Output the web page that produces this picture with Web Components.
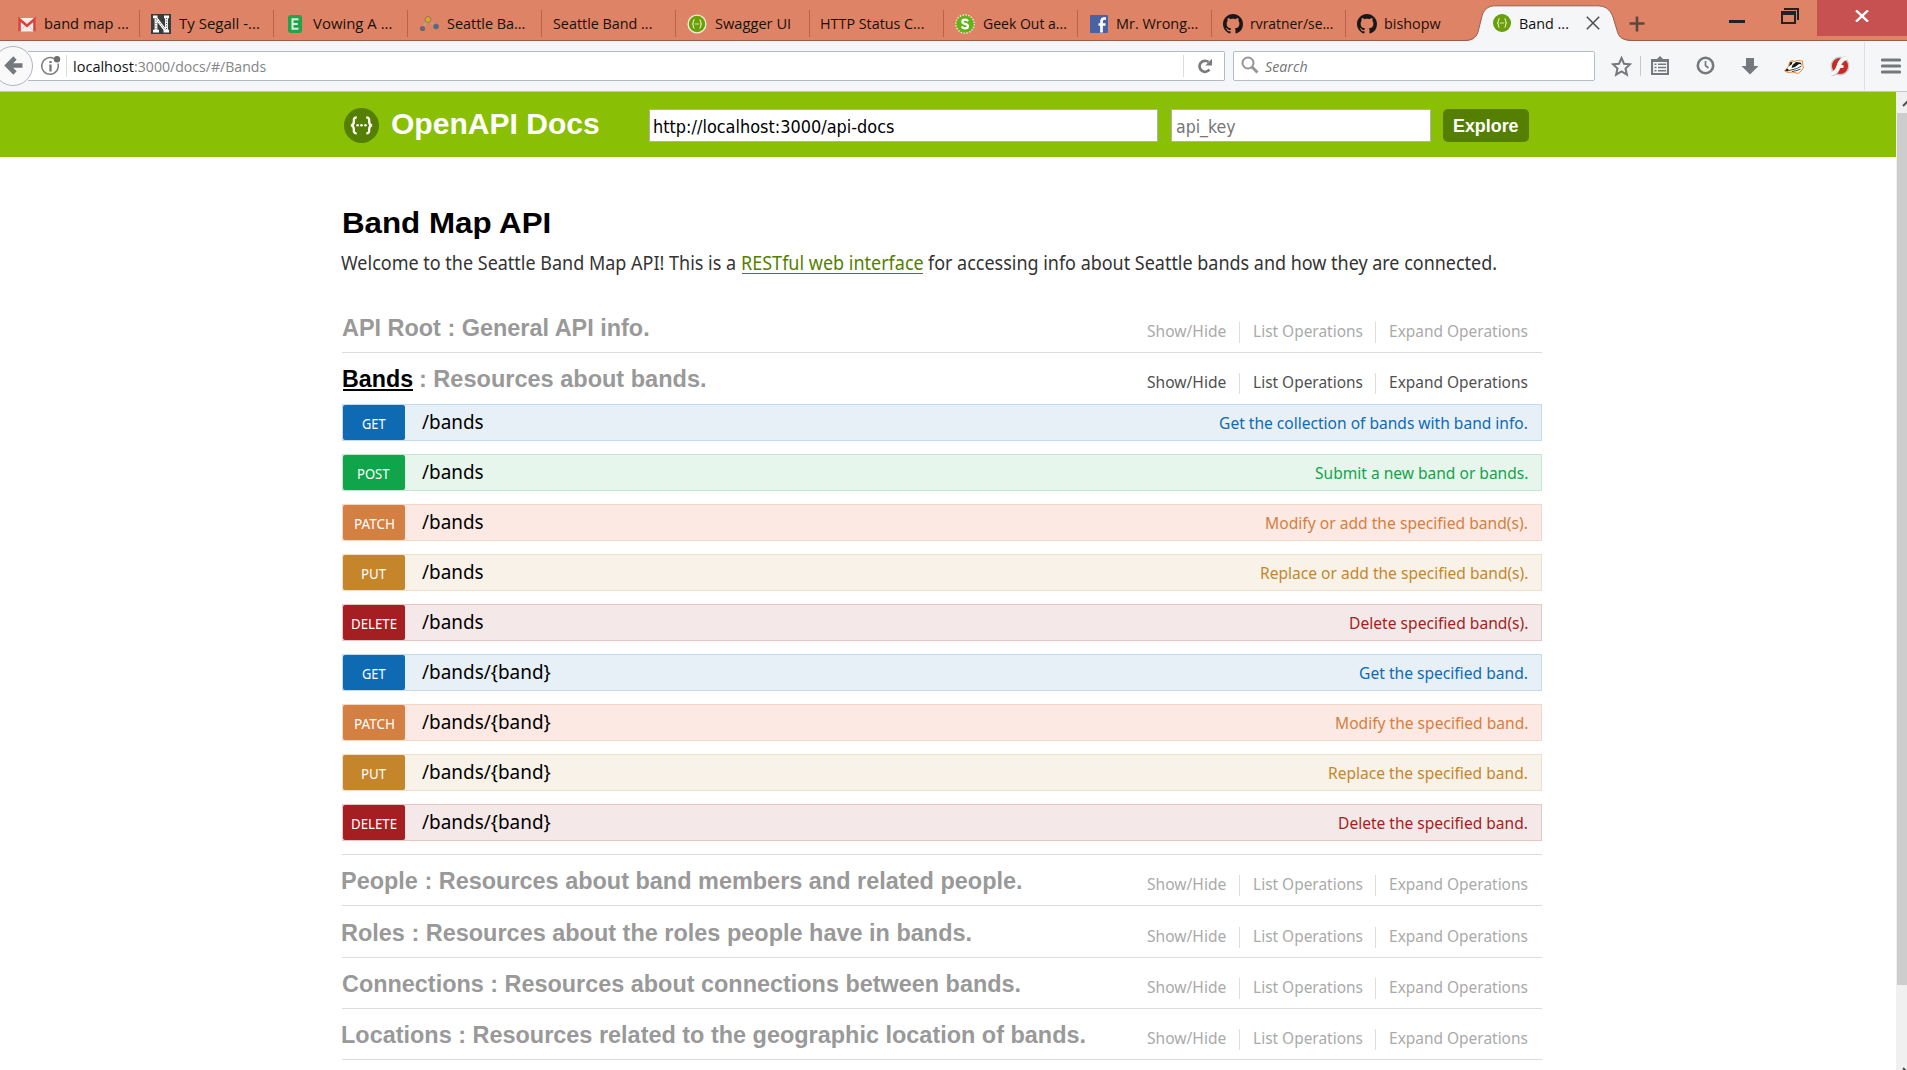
<!DOCTYPE html>
<html lang="en">
<head>
<meta charset="utf-8">
<title>Band Map API</title>
<style>
html,body{margin:0;height:100%;overflow:hidden;background:#fff}
body{font-family:"Noto Sans","Open Sans",sans-serif;color:#333}
</style>
</head>
<body>
<docs-window></docs-window>
<script>
const define = (name, html, after) => customElements.define(name, class extends HTMLElement {
  connectedCallback() {
    if (this.shadowRoot) return;
    const t = document.createElement('template');
    t.innerHTML = typeof html === 'function' ? html(this) : html;
    this.attachShadow({mode: 'open'}).append(t.content.cloneNode(true));
    if (after) after(this);
  }
});

/* Single line of text drawn at an exact ink width, set by the w attribute. */
const pen = document.createElement('canvas').getContext('2d');
define('fit-text', `<style>:host{display:block;flex:none;white-space:pre}span{display:inline-block;transform-origin:0 50%}</style><span><slot></slot></span>`, el => {
  const w = +el.getAttribute('w'), cs = getComputedStyle(el), s = el.shadowRoot.querySelector('span');
  pen.font = `${cs.fontStyle} ${cs.fontWeight} ${cs.fontSize} ${cs.fontFamily}`;
  const m = pen.measureText(el.textContent);
  const k = w / (m.actualBoundingBoxRight + m.actualBoundingBoxLeft);
  el.style.width = w + 'px';
  s.style.transform = `translateX(${m.actualBoundingBoxLeft * k}px) scaleX(${k})`;
});

const swagger = (ring) => `<svg width="20" height="20" viewBox="0 0 20 20"><circle cx="10" cy="10" r="${ring ? 9.6 : 9}" fill="${ring ? '#e9efdc' : '#5f9a10'}"/><circle cx="10" cy="10" r="8.2" fill="#6a9f08"/><path d="M7.6 5.6C5.9 5.6 6.6 8 6.2 9.1Q5.9 9.9 5 10Q5.9 10.100 6.2 10.900C6.600 12 5.900 14.400 7.600 14.400M12.400 5.600C14.100 5.600 13.400 8 13.800 9.100Q14.100 9.900 15 10Q14.100 10.100 13.800 10.900C13.400 12 14.100 14.400 12.400 14.400M7.800 10H12.200" fill="none" stroke="#d7e8b4" stroke-width="1.200"/></svg>`;
const github = `<svg width="20" height="20" viewBox="0 0 16 16"><path fill="#191717" d="M8 0C3.58 0 0 3.58 0 8c0 3.54 2.29 6.53 5.47 7.59.4.07.55-.17.55-.38 0-.19-.01-.82-.01-1.49-2.01.37-2.53-.49-2.69-.94-.09-.23-.48-.94-.82-1.13-.28-.15-.68-.52-.01-.53.63-.01 1.08.58 1.23.82.72 1.21 1.87.87 2.33.66.07-.52.28-.87.51-1.07-1.78-.2-3.64-.89-3.64-3.95 0-.87.31-1.59.82-2.15-.08-.2-.36-1.02.08-2.12 0 0 .67-.21 2.2.82.64-.18 1.32-.27 2-.27s1.36.09 2 .27c1.53-1.04 2.2-.82 2.2-.82.44 1.1.16 1.92.08 2.12.51.56.82 1.27.82 2.15 0 3.07-1.87 3.75-3.65 3.95.29.25.54.73.54 1.48 0 1.07-.01 1.93-.01 2.2 0 .21.15.46.55.38A8.01 8.01 0 0 0 16 8c0-4.420-3.580-8-8-8z"/></svg>`;
const icons = {
  gmail: `<svg width="20" height="20" viewBox="0 0 20 20"><rect x="1.500" y="4" width="17" height="13.500" rx="1" fill="#eee"/><path d="M4 16.500L9 10.500M16 16.500L11 10.500" stroke="#ccc"/><path d="M2.500 17.500V5.300L10 11.800L17.500 5.300V17.500" fill="none" stroke="#d8433a" stroke-width="2.600"/></svg>`,
  npr: `<svg width="20" height="20" viewBox="0 0 20 20"><path fill="#3b3b3d" d="M0 0H20V20H0z"/><path d="M2 2.800H6.500M5 4V16.500M2 17.200H8M13 2.800H18M15.500 4V16.500M12.500 17.200H18M5 4L14.500 16.500" fill="none" stroke="#fff" stroke-width="2.800"/><path d="M5 4V16M15.500 4V16M5.500 5L14.500 16" stroke="#3b3b3d" stroke-width=".9" stroke-dasharray="1 1.500"/></svg>`,
  e: `<svg width="20" height="20" viewBox="0 0 20 20"><rect x="3" y="1" width="14" height="18" rx="3" fill="#21a34c"/><path d="M13.500 5.200H7.500V14.800H13.500M7.500 10H12.800" fill="none" stroke="#d8efd9" stroke-width="2"/></svg>`,
  graph: `<svg width="20" height="20" viewBox="0 0 20 20"><path d="M3.500 14.500L9 5.500L17 12.500" fill="none" stroke="#b9a096" stroke-width="1.600"/><circle cx="3.500" cy="14.500" r="2.600" fill="#6c6570"/><circle cx="9" cy="5.500" r="3" fill="#e2a52b" stroke="#8c7a58"/><circle cx="17" cy="12.500" r="2.500" fill="#41718a" stroke="#736d70"/></svg>`,
  swagger: swagger(true), swaggerPlain: swagger(false), github,
  s: `<svg width="20" height="20" viewBox="0 0 20 20"><circle cx="10" cy="10" r="9" fill="#6cb71e" stroke="#e4edd2" stroke-width="1.800" stroke-dasharray="1.400 1.430"/><circle cx="10" cy="10" r="8.600" fill="#65b31a"/><path d="M13 7.200Q12 5.700 10 5.700Q7.400 5.700 7.400 7.700Q7.400 9.200 10 9.800Q12.900 10.400 12.900 12.200Q12.900 14.300 10 14.300Q7.700 14.300 6.800 12.500" fill="none" stroke="#fff" stroke-width="2.300"/></svg>`,
  fb: `<svg width="20" height="20" viewBox="0 0 20 20"><rect x="1" y="1" width="18" height="18" rx="1" fill="#4862a3"/><path d="M12.500 18.500V8.500Q12.500 4.500 15 4.500H17M9.500 10.500H16.500" fill="none" stroke="#fff" stroke-width="2.700"/></svg>`
};

define('browser-tab', el => `<style>
:host{display:flex;align-items:center;box-sizing:border-box;width:134px;height:35px;padding-left:11px;gap:8px;font:15px "Open Sans",sans-serif;color:#1b0f0b;flex:none}
:host([last]){width:118px}
i{flex:none;margin-left:auto;width:1px;height:27px;background:#ba6349}
:host([last]) i{display:none}
svg{display:block;flex:none}
::slotted(*){margin-top:-1px}
</style>${icons[el.getAttribute('icon')] || ''}<slot></slot><i></i>`);

define('active-tab', `<style>
:host{display:flex;position:relative;width:168px;height:36px;flex:none;margin-top:-1px;align-items:center;font:15px "Open Sans",sans-serif;color:#111}
.bg{position:absolute;left:0;top:0}
.in{display:flex;align-items:center;padding-left:28px;position:relative}
svg{display:block}
</style><svg class="bg" width="170" height="37" viewBox="0 0 170 37"><path d="M0 36C7 36 12 33.500 14 27L17.500 13C19 5 24 .8 31 .8H133C141 .8 146 4 149 12L153.500 27C155.500 33.500 160 36 170 36V37H0z" fill="#f5f6f7"/><path d="M0 35.500C7 35.500 12 33.500 14 27L17.500 13C19 5 24 .8 31 .8H133C141 .8 146 4 149 12L153.500 27C155.500 33.500 160 35.500 170 35.500" fill="none" stroke="#9b5d49" stroke-width="1"/></svg>
<div class="in">${icons.swaggerPlain}<fit-text w="48" style="margin-left:8px">Band ...</fit-text><svg width="14" height="14" viewBox="0 0 14 14" style="margin-left:18px"><path d="M.8 .8L13.200 13.200M13.200 .8L.8 13.200" stroke="#4c4c4c" stroke-width="1.500"/></svg></div>`);

const tabs = [['gmail','band map ...',83],['npr','Ty Segall -...',80],['e','Vowing A ...',78.5],['graph','Seattle Ba...',77.5],['','Seattle Band ...',98.5],['swagger','Swagger UI',75],['','HTTP Status C...',102.5],['s','Geek Out a...',83],['fb','Mr. Wrong...',80.5],['github','rvratner/se...',81.5],['github','bishopw',56]];
define('tab-strip', `<style>
:host{display:flex;box-sizing:border-box;height:41px;padding:6px 0 0 6px;background:linear-gradient(#de8365,#de8365 40px,#9b5d49 40px)}
.plus{margin:10px 0 0 -3px;flex:none}
.win{display:flex;margin:-6px 0 0 auto;height:36px;flex:none}
.min{width:16px;height:3px;background:#222;margin:20px 36px 0 0}
.res{margin:8px 18px 0 0}
.close{width:90px;background:#c75050;display:flex}
.close svg{margin:10px 0 0 38px}
</style>${tabs.map((t, i) => `<browser-tab icon="${t[0]}"${i === 10 ? ' last' : ''}><fit-text w="${t[2]}">${t[1]}</fit-text></browser-tab>`).join('')}
<active-tab></active-tab>
<svg class="plus" width="16" height="16" viewBox="0 0 16 16"><path d="M8 .5V15.500M.5 7.500H15.500" stroke="#5b4740" stroke-width="2.600"/></svg>
<div class="win"><div class="min"></div><svg class="res" width="18" height="16" viewBox="0 0 18 16" shape-rendering="crispEdges"><path d="M3 0H18V12H16V2H3zM0 3H15V16H0zM2 7V14H13V7z" fill="#222" fill-rule="evenodd"/></svg><div class="close"><svg width="14" height="12" viewBox="0 0 14 12"><path d="M1 .3L13 11.700M13 .3L1 11.700" stroke="#fff" stroke-width="2.300"/></svg></div></div>`);

define('nav-bar', `<style>
:host{display:flex;align-items:center;box-sizing:border-box;height:51px;background:#f5f6f7;border-bottom:1px solid #c2c3c5;font:15px "Open Sans",sans-serif}
svg{display:block;flex:none}
.back{margin-right:-5px;position:relative;flex:none}
.url,.search{display:flex;align-items:center;box-sizing:border-box;height:30px;background:#fff;border:1px solid #b3bac7}
.url{width:1197px;border-left:0;margin-left:0;border-radius:0 2px 2px 0}
.search{width:362px;margin-left:8px;border-radius:2px;padding-left:7px;border-color:#b6bdca}
.sep{width:1px;height:22px;background:#dcdcdc;flex:none}
</style>
<svg class="back" width="33" height="40" viewBox="0 0 33 40"><circle cx="13" cy="20" r="19.500" fill="#f9f9fa" stroke="#aeb5c1"/><path d="M15 12L7.500 19.500L15 27M8.500 19.500H22.500" fill="none" stroke="#75787d" stroke-width="4.600"/></svg>
<div class="url">
<svg width="22" height="22" viewBox="0 0 22 22" style="margin-left:12px"><path d="M14 3.600A8.300 8.300 0 1 0 18 8.500" fill="none" stroke="#808080" stroke-width="1.500"/><path d="M10.500 9.600V16.500M10.500 6V8" stroke="#777" stroke-width="2.300"/><circle cx="17" cy="4.200" r="3.200" fill="#6f6f6f"/></svg>
<div class="sep" style="margin:0 7px 0 4px"></div>
<fit-text w="59.5" style="color:#111">localhost</fit-text><fit-text w="131" style="color:#858585;margin-left:1px">:3000/docs/#/Bands</fit-text>
<div class="sep" style="margin-left:auto"></div>
<svg width="14" height="16" viewBox="0 0 14 16" style="margin:0 12.500px 0 14px"><path d="M11.500 11.500A5.500 5.500 0 1 1 10.500 4" fill="none" stroke="#7b7b7b" stroke-width="2.700"/><path d="M14 .8V7.500H7.300z" fill="#7b7b7b"/></svg>
</div>
<div class="search"><svg width="18" height="18" viewBox="0 0 18 18" style="margin-top:-2px"><circle cx="7" cy="7" r="5.500" fill="none" stroke="#969696" stroke-width="2"/><path d="M11 11L16.500 16.500" stroke="#969696" stroke-width="3"/></svg><fit-text w="42" style="font-style:italic;color:#757575;margin-left:6px">Search</fit-text></div>
<svg width="21" height="21" viewBox="0 0 21 21" style="margin-left:16px"><path d="M10.500 2L13 7.700L19 8.300L14.500 12.500L15.900 18.700L10.500 15.500L5.100 18.700L6.500 12.500L2 8.300L8 7.700z" fill="none" stroke="#75787d" stroke-width="2"/></svg>
<div class="sep" style="height:20px;background:#c9c9c9;margin:0 10px 0 8px"></div>
<svg width="18" height="20" viewBox="0 0 18 20"><path d="M1 4H17V18H1z" fill="none" stroke="#75787d" stroke-width="2.200"/><path d="M5 4L9 0L13 4zM0 3H18V6H0z" fill="#75787d"/><path d="M3.500 8.300H5.500M7 8.300H15M3.500 11.500H5.500M7 11.500H15M3.500 14.700H5.500M7 14.700H15" stroke="#75787d" stroke-width="1.600"/></svg>
<svg width="20" height="20" viewBox="0 0 20 20" style="margin-left:26px"><circle cx="10.500" cy="9.500" r="7.700" fill="none" stroke="#75787d" stroke-width="2.600"/><path d="M10.500 5V9.700L13.500 12" fill="none" stroke="#75787d" stroke-width="1.700"/></svg>
<svg width="18" height="18" viewBox="0 0 18 18" style="margin-left:26px"><path d="M5 1H13V9H17.500L9 17.500L.5 9H5z" fill="#75787d"/></svg>
<svg width="20" height="18" viewBox="0 0 20 18" style="margin-left:25px"><path d="M.6 14L3 11L4.500 9.500L5.500 5L8 3.500L10 4.500L14 3.500L18.500 4L18.800 8L19.300 11L17 14L14 16.500L9 15L4 15.500z" fill="#fff" stroke="#ea8a35" stroke-width="1"/><path d="M5 9.500L6 5.500L8.500 4.500L8 7zM8.500 8L12 5L16.500 5.500L18 7.500L15 7L11 10L7.500 11zM1 13.500L3.500 11.500L5 13L4 14.500z" fill="#171717"/><path d="M5 13.500L9 12.500L13 11.500L17.500 9M8 14.500L13 13.500L16.500 12" fill="none" stroke="#333" stroke-width=".9"/></svg>
<svg width="20" height="20" viewBox="0 0 20 20" style="margin-left:26px"><circle cx="10" cy="10" r="8.800" fill="#cb2a22" stroke="#c9c9ca" stroke-width="1.400"/><path d="M1 18.300Q6.500 17.500 8.800 10Q10.800 2.800 17 2" fill="none" stroke="#bdbdbf" stroke-width="4.600"/><path d="M1 18Q6.500 17.200 8.600 10Q10.600 2.500 17 1.800" fill="none" stroke="#f8f8f8" stroke-width="3.700"/><path d="M8 10.500H13.500" stroke="#f8f8f8" stroke-width="2.800"/></svg>
<div class="sep" style="height:48px;margin:0 16px 0 14px;background:#dedfe1"></div>
<svg width="20" height="16" viewBox="0 0 20 16"><path d="M1.500 2H18.500M1.500 8H18.500M1.500 14H18.500" stroke="#75787d" stroke-width="3.200" stroke-linecap="round"/></svg>`);

define('docs-header', `<style>
:host{display:flex;box-sizing:border-box;height:65px;padding:17px 0 0 344px;background:#89bf04;align-items:flex-start}
.title{font:bold 30px/33px "Liberation Sans",sans-serif;color:#fff;margin:-2px 0 0 13px}
.box{box-sizing:border-box;height:33px;border:1px solid #b1b1a8;background:#fff;font:18px/33px "DejaVu Sans Condensed","DejaVu Sans",sans-serif;color:#000;padding-left:4px}
.btn{margin-left:12px;width:86px;height:33px;border-radius:5px;background:#547f00;color:#fff;font:bold 18px/34px "Liberation Sans",sans-serif;box-sizing:border-box;padding-left:11px}
</style>
<svg width="35" height="35" viewBox="0 0 35 35" style="margin-top:-1px"><circle cx="17.500" cy="17.500" r="17.500" fill="#547f00"/><path d="M12.700 9.500C9.600 9.300 9.800 11.500 9.800 14C9.800 16.500 9 17.200 7 17.400C9 17.700 9.800 18.500 9.800 21C9.800 23.500 9.600 25.500 12.700 25.300M22.300 9.500C25.400 9.300 25.200 11.500 25.200 14C25.200 16.500 26 17.200 28 17.400C26 17.700 25.200 18.500 25.200 21C25.200 23.500 25.400 25.500 22.300 25.300" fill="none" stroke="#fff" stroke-width="2.300"/><g fill="#fff"><circle cx="13.600" cy="17.300" r="1.300"/><circle cx="17.500" cy="17.300" r="1.300"/><circle cx="21.400" cy="17.300" r="1.300"/></g></svg>
<fit-text class="title" w="207">OpenAPI Docs</fit-text>
<div class="box" style="width:509px;margin-left:50px"><fit-text w="240">http://localhost:3000/api-docs</fit-text></div>
<div class="box" style="width:260px;margin-left:13px;padding-left:3.500px;color:#757575"><fit-text w="60">api_key</fit-text></div>
<div class="btn"><fit-text w="64.500">Explore</fit-text></div>`);

/* One API resource: heading on the left, operation links on the right. */
define('api-resource', el => `<style>
:host{display:block}
.head{display:flex;box-sizing:border-box;height:${el.getAttribute('h')}px;align-items:flex-end;color:#999}
:host([line]) .head{border-bottom:1px solid #ddd}
h2{margin:0 0 9.500px 0;display:flex;font:bold 23.500px/30px "Liberation Sans",sans-serif}
.ops{display:flex;align-items:center;margin:0 14px 7px auto;font:16.500px/28px "Noto Sans",sans-serif;color:#aaa}
:host([active]) .ops{color:#505050}
:host([active]) h2{margin:0 0 10px 1px}
:host([active]) .ops{margin-bottom:8px}
i{width:1px;height:21px;background:#ddd;margin:2px 14px 0 13px}
i+fit-text+i{margin-left:12px}
</style><div class="head"><h2><slot name="title"></slot></h2><div class="ops"><fit-text w="79">Show/Hide</fit-text><i></i><fit-text w="109">List Operations</fit-text><i></i><fit-text w="138">Expand Operations</fit-text></div></div><slot></slot>`);

const palette = {GET:['#0f6ab4','#e7f0f7','#c3d9ec',24],POST:['#10a54a','#e7f6ec','#c3e8d1',32],PATCH:['#d38042','#fce9e3','#f5d5c3',39],PUT:['#c5862b','#f9f2e9','#f0e0ca',24.5],DELETE:['#a41e22','#f5e8e8','#e8c6c7',44.5]};
define('api-operation', el => {
  const m = el.getAttribute('method'), [c, bg, line, w] = palette[m];
  return `<style>
:host{display:flex;align-items:center;box-sizing:border-box;height:37px;margin-bottom:13px;border:1px solid ${line};background:${bg};padding-right:13.500px}
.m{width:62px;height:35px;border-radius:2px;background:${c};color:#fff;font:13.500px/38px "Noto Sans",sans-serif;display:flex;justify-content:center}
.p{font:19px/32px "Noto Sans",sans-serif;color:#000;margin:-2px 0 0 17px}
.d{font:16.500px/34px "Noto Sans",sans-serif;color:${c};margin-left:auto}
</style><div class="m"><fit-text w="${w}">${m}</fit-text></div><div class="p"><slot name="path"></slot></div><div class="d"><slot></slot></div>`;
});

define('page-scrollbar', `<style>:host{display:block;width:11px;background:#f0f0f0;flex:none;overflow:hidden}
div{height:872px;margin-left:1px;background:#cdcdcd}svg{display:block}</style>
<svg width="11" height="21" viewBox="0 0 11 21"><path d="M7 14L12 9" stroke="#505050" stroke-width="2"/></svg><div></div><svg width="11" height="85" viewBox="0 0 11 85"><path d="M7 83L12 88" stroke="#505050" stroke-width="2"/></svg>`);

const ops = [['GET','/bands','Get the collection of bands with band info.',307.5],['POST','/bands','Submit a new band or bands.',213],['PATCH','/bands','Modify or add the specified band(s).',261.5],['PUT','/bands','Replace or add the specified band(s).',267],['DELETE','/bands','Delete specified band(s).',178],['GET','/bands/{band}','Get the specified band.',167.5],['PATCH','/bands/{band}','Modify the specified band.',192],['PUT','/bands/{band}','Replace the specified band.',198.5],['DELETE','/bands/{band}','Delete the specified band.',188.5]];
const res = (h, w, t) => `<api-resource line h="${h}"><fit-text slot="title" w="${w}">${t}</fit-text></api-resource>`;
define('docs-page', `<style>
:host{display:block;flex:1;background:#fff}
main{width:1200px;margin-left:342px}
h1{margin:0;padding:49px 0 0 1.500px;font:bold 30px/34px "Liberation Sans",sans-serif;color:#000}
p{display:flex;margin:6px 0 0 -1px;font:19px/34px "Noto Sans",sans-serif;color:#333;height:71px}
.list{border-bottom:1px solid #ddd}
.link{color:#547f00;height:27px;line-height:34px;border-bottom:1px solid #547f00;margin:0 5px 0 6.500px}
.cur{color:#000;height:25px;border-bottom:2px solid #000;margin-right:8px}
</style><main>
<h1><fit-text w="207">Band Map API</fit-text></h1>
<p><fit-text w="394.5">Welcome to the Seattle Band Map API! This is a</fit-text><fit-text class="link" w="181">RESTful web interface</fit-text><fit-text w="568">for accessing info about Seattle bands and how they are connected.</fit-text></p>
${res(36, 307, 'API Root : General API info.')}
<div class="list"><api-resource active h="51"><fit-text class="cur" slot="title" w="70">Bands</fit-text><fit-text slot="title" w="284">: Resources about bands.</fit-text>
${ops.map(o => `<api-operation method="${o[0]}"><fit-text slot="path" w="${o[1].length > 6 ? 128.5 : 61.5}">${o[1]}</fit-text><fit-text w="${o[3]}">${o[2]}</fit-text></api-operation>`).join('')}</api-resource></div>
${res(51, 679, 'People : Resources about band members and related people.')}
${res(52, 628.5, 'Roles : Resources about the roles people have in bands.')}
${res(51, 677.5, 'Connections : Resources about connections between bands.')}
${res(51, 742.5, 'Locations : Resources related to the geographic location of bands.')}
</main>`);

define('docs-window', `<style>:host{display:flex;flex-direction:column;width:1907px;height:1070px;overflow:hidden}
.view{display:flex;flex:1;min-height:0}.col{flex:1;min-width:0}</style>
<tab-strip></tab-strip><nav-bar></nav-bar><div class="view"><div class="col"><docs-header></docs-header><docs-page></docs-page></div><page-scrollbar></page-scrollbar></div>`);
</script>
</body>
</html>
